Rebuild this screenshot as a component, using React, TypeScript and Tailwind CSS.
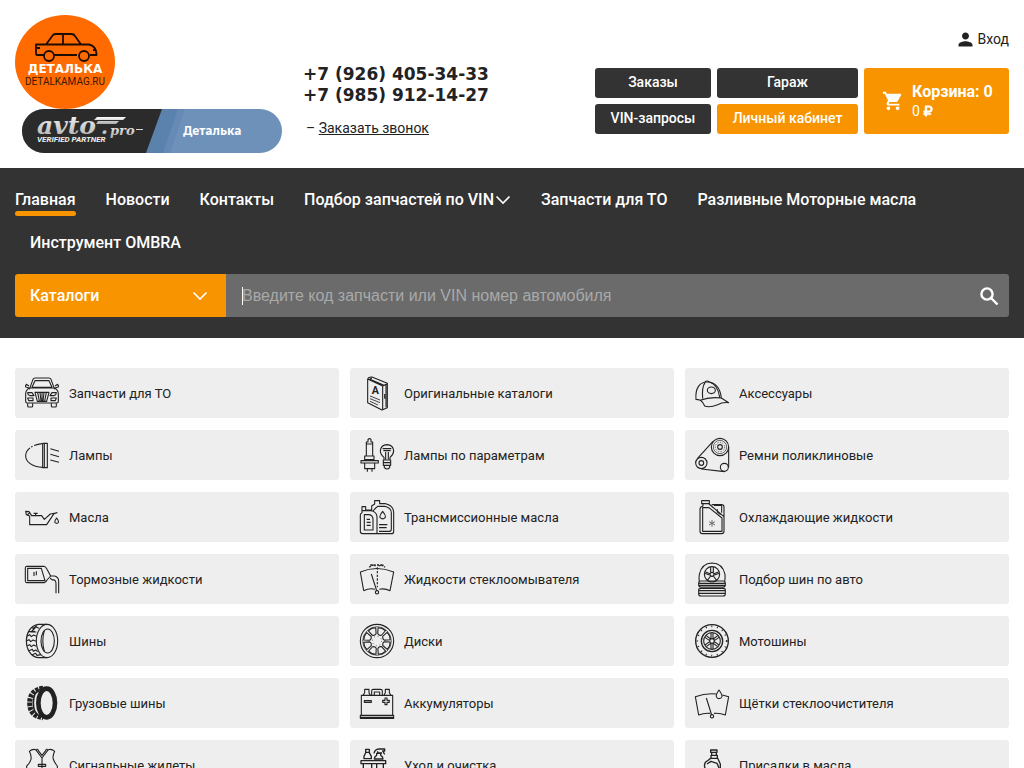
import React from 'react';
import { MdPerson } from 'react-icons/md';
import { FaRubleSign } from 'react-icons/fa';

interface IconProps {
  children: React.ReactNode;
}

const Icon: React.FC<IconProps> = ({ children }) => (
  <svg
    viewBox="0 0 102 102"
    className="w-[34px] h-[34px] shrink-0 overflow-visible"
    fill="none"
    stroke="#222"
    strokeWidth="3.3"
    strokeLinejoin="round"
    aria-hidden="true"
  >
    {children}
  </svg>
);

const spokes = [0, 45, 90, 135, 180, 225, 270, 315];

const categories = [
  {
    title: 'Запчасти для ТО',
    icon: (
      <Icon>
        <path d="M13 40 24 10Q26 6 30 6H72Q76 6 78 10L89 40M21 34 30 14H72L81 34Z" />
        <path d="M13 36Q2 42 2 54V76Q2 81 6 81H96Q100 81 100 76V54Q100 42 89 36ZM12 30 4 25Q0 28 2 33L11 35M90 30 98 25Q102 28 100 33L91 35" />
        <path d="M8 50H21L27 59H15Q8 57 8 50ZM94 50H81L75 59H87Q94 57 94 50ZM8 66H24V74H11ZM94 66H78V74H91Z" />
        <path d="M30 49H72L65 76H37ZM38 50 43 75M45 50 48 75M51 50V75M57 50 54 75M64 50 59 75" />
        <path d="M8 82V90Q8 93 11 93H20Q23 93 23 90V82M79 82V90Q79 93 82 93H91Q94 93 94 90V82" />
      </Icon>
    ),
  },
  {
    title: 'Оригинальные каталоги',
    icon: (
      <Icon>
        <path d="M23 9V80L66 102 82 95V22L36 3Q26 2 23 9ZM23 9 68 30V102M28 9 72 28 82 23M36 6 30 9M74 54V68M68 30 82 24M78 28V94" />
        <path d="M30 60 60 72M30 68 60 80M30 76 54 87" strokeWidth="2.5" />
        <text x="35" y="55" fontSize="32" fontWeight="700" fontFamily="Roboto, sans-serif" fill="#222" stroke="none">A</text>
      </Icon>
    ),
  },
  {
    title: 'Аксессуары',
    icon: (
      <Icon>
        <path d="M3 70C0 36 15 18 36 18 58 17 76 34 79 66L101 80Q82 78 68 86 44 96 29 90 24 78 16 73 9 70 3 70Z" />
        <path d="M16 73Q42 62 79 66M30 20Q20 34 23 68M43 18Q68 24 74 64M30 18Q36 12 43 18" />
        <ellipse cx="49" cy="43" rx="12" ry="10" />
      </Icon>
    ),
  },
  {
    title: 'Лампы',
    icon: (
      <Icon>
        <path d="M52 17C16 21 2 38 2 53 2 69 18 87 54 88" strokeDasharray="25 5 5 4 140" />
        <path d="M53 16H67V89H53ZM58 18V88M76 32 102 40M76 49 102 56M76 66 102 73" />
      </Icon>
    ),
  },
  {
    title: 'Лампы по параметрам',
    icon: (
      <Icon>
        <path d="M19 54V12H24V4Q28 0 33 4V12H38V54M20 18H38M14 54H42V65H14ZM3 68H55V75H3ZM14 76V92H44V76M22 93V101M36 93V101" />
        <path d="M72 66V58Q61 49 61 38 63 21 81 20 99 21 101 38 101 49 90 58V66M70 66H92V82H70ZM73 82V89Q81 97 89 89V82M70 74H92M77 64V42M85 64V42M68 32H94M70 38H92" />
      </Icon>
    ),
  },
  {
    title: 'Ремни поликлиновые',
    icon: (
      <Icon>
        <circle cx="75" cy="27" r="26" />
        <circle cx="75" cy="27" r="20" strokeWidth="2" />
        <circle cx="75" cy="27" r="7" />
        <circle cx="19" cy="75" r="17" />
        <circle cx="19" cy="75" r="7" />
        <circle cx="88" cy="88" r="12" />
        <path d="M54 10 7 62M101 27V88M19 93 88 101" />
        <circle cx="75" cy="27" r="14" strokeWidth="2" strokeDasharray="4 4" />
      </Icon>
    ),
  },
  {
    title: 'Масла',
    icon: (
      <Icon>
        <path d="M14 74V48L4 44 2 34 12 35 20 47H50L58 58 76 42 96 38 87 41 65 74ZM7 45 15 37M26 40H38M32 40V47" />
        <path d="M95 54Q88 63 90 68 95 72 100 68 102 63 95 54Z" />
      </Icon>
    ),
  },
  {
    title: 'Трансмиссионные масла',
    icon: (
      <Icon>
        <path d="M6 38V20H17V30H35V18L44 12V2H59V11H77Q101 17 101 38V95Q101 101 94 101H8Q1 101 1 94V44Q2 40 6 38ZM6 32H34Q51 36 51 51V101" />
        <path d="M39 33Q48 22 54 19H74Q94 24 94 38V88Q94 94 88 94H57M13 44H27Q39 46 39 58V90H13ZM20 58H30M20 67H32M20 76H32M57 74H82M57 83H80M68 34Q58 46 60 52 68 61 76 52 78 46 68 34Z" />
      </Icon>
    ),
  },
  {
    title: 'Охлаждающие жидкости',
    icon: (
      <Icon>
        <path d="M20 2H43V11H20ZM24 12V18Q15 20 15 28V94Q15 101 22 101H80Q87 101 87 94V20Q87 14 79 14H50M42 12 86 49" />
        <path d="M23 23H42L81 54V94H23ZM57 16H80V38M67 28V36L77 44" />
        <path d="M51 60V80M42 65 60 75M60 65 42 75" strokeWidth="2.5" stroke="#555" />
      </Icon>
    ),
  },
  {
    title: 'Тормозные жидкости',
    icon: (
      <Icon>
        <path d="M5 13H57Q62 14 66 22L77 42 66 54Q63 61 58 62H5Q1 61 1 57V17Q1 14 5 13ZM8 19H49L60 56H8Z" />
        <path d="M27 30V42M34 28V40M76 42H89Q101 45 101 58V94M75 49 83 54Q93 52 93 65V94" />
      </Icon>
    ),
  },
  {
    title: 'Жидкости стеклоомывателя',
    icon: (
      <Icon>
        <path d="M1 30Q50 9 101 30L90 86Q74 78 58 82M11 86Q29 77 45 82M11 86 1 30M34 36 50 86" />
        <path d="M52 16V76" strokeDasharray="7 4" />
        <path d="M28 16Q36 6 47 12M56 12Q67 6 75 16" strokeDasharray="6 3" strokeWidth="4" />
        <path d="M31 9H72" strokeDasharray="6 4" strokeWidth="5" />
        <circle cx="51" cy="91" r="5" />
      </Icon>
    ),
  },
  {
    title: 'Подбор шин по авто',
    icon: (
      <Icon>
        <path d="M13 58Q11 48 13 37 20 4 51 3 83 4 90 37 91 48 89 58" />
        <circle cx="51" cy="37" r="23" />
        <circle cx="51" cy="37" r="6" />
        <path d="M57 35 72 29M55 42 65 55M47 42 37 55M45 35 30 29M47 31V15M55 31V15M58 39 74 34M44 39 28 34" />
        <path d="M18 57H84Q91 57 91 63V69Q91 75 84 75H18Q11 75 11 69V63Q11 57 18 57ZM18 79H84Q91 79 91 84V96Q91 102 84 102H18Q11 102 11 96V84Q11 79 18 79ZM12 64H90M12 70H90M12 86H90M12 94H90" />
      </Icon>
    ),
  },
  {
    title: 'Шины',
    icon: (
      <Icon>
        <ellipse cx="66" cy="51" rx="32" ry="50" />
        <ellipse cx="68" cy="51" rx="20" ry="36" />
        <path d="M66 1H40C16 4 4 28 4 51S16 98 40 101H66M58 20Q49 51 58 82M36 4 24 14 30 12 18 24 30 22M12 22 34 24M7 36 14 32 19 38 26 33 34 37M4 51 12 47 17 53 24 48 33 52M6 66 14 62 19 68 26 63 34 67M12 80 22 76 25 82 32 78 38 83M22 92 32 88 36 94 48 92M22 12 34 9 42 13" />
      </Icon>
    ),
  },
  {
    title: 'Диски',
    icon: (
      <Icon>
        <circle cx="51" cy="51" r="50" />
        <circle cx="51" cy="51" r="43" strokeWidth="2" />
        {spokes.map((angle) => (
          <path
            key={angle}
            transform={`rotate(${angle + 22} 51 51)`}
            d="M39 13Q51 8 63 13L57 30Q51 34 45 30Z"
          />
        ))}
        <circle cx="51" cy="51" r="14" strokeWidth="2" strokeDasharray="3 8" />
      </Icon>
    ),
  },
  {
    title: 'Мотошины',
    icon: (
      <Icon>
        <circle cx="51" cy="51" r="49" strokeWidth="4" />
        <circle cx="51" cy="51" r="44" strokeWidth="5" strokeDasharray="3 14" />
        <circle cx="51" cy="51" r="32" strokeWidth="4" />
        <circle cx="51" cy="51" r="25" />
        <circle cx="51" cy="51" r="7" />
        <path d="M48 44V27M54 44V27M48 58V75M54 58V75M44 50 30 40M47 45 33 34M58 50 72 40M55 45 69 34M44 53 30 63M47 58 34 68M58 53 72 63M55 58 68 68" />
      </Icon>
    ),
  },
  {
    title: 'Грузовые шины',
    icon: (
      <Icon>
        <ellipse cx="65" cy="51" rx="25" ry="43" strokeWidth="14" />
        <path d="M54 7C25 10 14 28 14 51S25 92 54 95" strokeWidth="15" strokeDasharray="10 3" />
        <path d="M46 10C31 16 25 31 25 51S31 86 46 92" strokeWidth="5" />
      </Icon>
    ),
  },
  {
    title: 'Аккумуляторы',
    icon: (
      <Icon>
        <path d="M4 28H98V88H4ZM1 88H101V97H1ZM9 28 14 20V10H27V20L31 28M72 28 76 20V10H88V20L93 28M35 28V15Q35 10 40 10H62Q67 10 67 15V28M43 28V18H59V28M1 94H101" />
        <path d="M13 44H34V49H13ZM75 36H81V43H88V49H81V56H75V49H68V43H75Z" />
      </Icon>
    ),
  },
  {
    title: 'Щётки стеклоочистителя',
    icon: (
      <Icon>
        <path d="M64 24Q32 21 1 32L11 87Q28 80 45 82M57 82Q74 80 91 87L101 32 82 27M34 36 50 87" />
        <path d="M72 12Q62 26 64 32 66 38 72 38 79 38 81 32 82 26 72 12Z" />
        <circle cx="51" cy="91" r="5" />
      </Icon>
    ),
  },
  {
    title: 'Сигнальные жилеты',
    icon: (
      <Icon>
        <path d="M13 10Q22 2 32 5L51 30 70 5Q80 2 89 10 82 24 85 34 90 46 97 54V98H5V54Q14 46 18 34 20 22 13 10ZM32 5Q38 1 40 8L51 22 62 8Q64 1 70 5M51 30V98M40 49H62V55H40Z" />
      </Icon>
    ),
  },
  {
    title: 'Уход и очистка',
    icon: (
      <Icon>
        <path d="M17 4H28V13H17ZM17 14 12 25V32H34V25L28 14M42 16Q44 4 57 3H74V9H68L74 19M53 10V15H66M50 16H62V22Q69 26 69 33H43Q43 26 50 22Z" strokeWidth="4" />
        <path d="M3 38H77V47H3ZM10 48V98H70V48M35 48V66H50V48" strokeWidth="4" />
      </Icon>
    ),
  },
  {
    title: 'Присадки в масла',
    icon: (
      <Icon>
        <path d="M47 6H66V13H47ZM50 14V22H64V14M48 22H67V31H48ZM47 31Q42 36 32 42 26 50 30 60V98H76V48L68 31M36 48 48 40 66 46 72 60" strokeWidth="4" />
      </Icon>
    ),
  },
];

const menu = [
  { title: 'Главная', active: true },
  { title: 'Новости' },
  { title: 'Контакты' },
  { title: 'Подбор запчастей по VIN', dropdown: true },
  { title: 'Запчасти для ТО' },
  { title: 'Разливные Моторные масла' },
  { title: 'Инструмент OMBRA' },
];

const Chevron = () => (
  <svg viewBox="0 0 16 10" className="w-4 h-2.5" fill="none" stroke="#fff" strokeWidth="1.6" aria-hidden="true">
    <path d="M1.5 1.5 8 8 14.5 1.5" />
  </svg>
);

const CartIcon = () => (
  <svg viewBox="0 0 24 24" className="w-[22px] h-[22px]" fill="currentColor" aria-hidden="true">
    <path d="M7 18c-1.1 0-1.99.9-1.99 2S5.9 22 7 22s2-.9 2-2-.9-2-2-2zM1 2v2h2l3.6 7.59-1.35 2.45c-.16.28-.25.61-.25.96 0 1.1.9 2 2 2h12v-2H7.42c-.14 0-.25-.11-.25-.25l.03-.12.9-1.63h7.45c.75 0 1.41-.41 1.75-1.03l3.58-6.49A1.003 1.003 0 0 0 20 4H5.21l-.94-2H1zm16 16c-1.1 0-1.99.9-1.99 2s.89 2 1.99 2 2-.9 2-2-.9-2-2-2z" />
  </svg>
);

const SearchIcon = () => (
  <svg viewBox="0 0 24 24" className="w-6 h-6" fill="none" stroke="currentColor" strokeWidth="2.4" aria-hidden="true">
    <circle cx="10" cy="10" r="5.6" />
    <path d="M14 14 20.500 20.500" />
  </svg>
);

const Logo = () => (
  <svg viewBox="0 0 100 94" className="w-[100px] h-[94px]" role="img" aria-label="Деталька">
    <ellipse cx="50" cy="47" rx="50" ry="47" fill="#ff6b00" />
    <g fill="none" stroke="#1c0d00" strokeWidth="1.8" strokeLinejoin="round">
      <path d="M29 40H22Q21 40 21 38V29.500H31L38 20Q39 19 41 19H56Q59 19 60 21L66 29.500H74Q81 31 81.500 39V40H75M62 40H39M31 29.500H66M48 19V29.500M22 33H25M78 35H81" />
      <circle cx="34" cy="41" r="5" />
      <circle cx="69" cy="41" r="5" />
    </g>
    <text x="50" y="58" textAnchor="middle" fontFamily="'DejaVu Sans', sans-serif" fontWeight="700" fontSize="12" fill="#fff">ДЕТАЛЬКА</text>
    <text x="50" y="70" textAnchor="middle" fontFamily="Roboto, sans-serif" fontSize="10" fill="#3a1800">DETALKAMAG.RU</text>
  </svg>
);

const PartnerBadge = () => (
  <svg viewBox="0 0 260 44" className="w-[260px] h-11" role="img" aria-label="avto.pro verified partner">
    <defs>
      <clipPath id="badge">
        <rect width="260" height="44" rx="22" />
      </clipPath>
      <linearGradient id="metal" x1="0" y1="0" x2="0" y2="1">
        <stop offset="0" stopColor="#fff" />
        <stop offset="1" stopColor="#aaa" />
      </linearGradient>
    </defs>
    <g clipPath="url(#badge)">
      <rect width="260" height="44" fill="#6e91ba" />
      <path d="M139 0H163L148 44H124Z" fill="#658ab5" />
      <path d="M139 0H156L141 44H124Z" fill="#5b82ad" />
      <path d="M0 0H140L124 44H0Z" fill="#2b2b2b" />
    </g>
    <g fill="url(#metal)" fontStyle="italic">
      <text x="15" y="25" fontFamily="'DejaVu Serif', serif" fontWeight="700" fontSize="25">avto</text>
      <text x="79" y="25" fontFamily="'DejaVu Serif', serif" fontWeight="700" fontSize="20">.</text>
      <text x="88" y="26" fontFamily="'DejaVu Serif', serif" fontWeight="700" fontSize="13">pro</text>
      <path d="M75 8H104L101 11H72ZM76 12H97L94 15H74Z" />
      <path d="M114 20H121V21H114Z" />
    </g>
    <text x="15" y="33" fontFamily="Roboto, sans-serif" fontStyle="italic" fontWeight="700" fontSize="8" fill="#eee">VERIFIED PARTNER</text>
    <text x="161" y="26" fontFamily="'Noto Sans', sans-serif" fontWeight="700" fontSize="12" fill="#fff">Деталька</text>
  </svg>
);

const Header = () => (
  <header className="flex px-[15px] pt-[15px] pb-[15px] text-[#222]">
    <div className="w-72 shrink-0">
      <a href="#" className="block">
        <Logo />
      </a>
      <a href="#" className="block pl-[7px]">
        <PartnerBadge />
      </a>
    </div>

    <div className="pt-[49px]">
      <div className="flex flex-col font-['DejaVu_Sans',sans-serif] text-[17px] leading-[21px] font-bold">
        <a href="tel:+79264053433">+7 (926) 405-34-33</a>
        <a href="tel:+79859121427">+7 (985) 912-14-27</a>
      </div>
      <div className="mt-3 pl-[3px] text-sm leading-5">
        – <button type="button" className="underline cursor-pointer">Заказать звонок</button>
      </div>
    </div>

    <div className="ml-auto flex flex-col items-end">
      <a href="#" className="mt-3.5 flex h-5 items-center gap-0.5 text-sm leading-5">
        <MdPerson size={21} />
        Вход
      </a>
      <div className="mt-[19px] flex gap-1.5 text-sm font-medium text-white">
        <nav className="grid grid-cols-[116px_141px] gap-1.5 text-center leading-7">
          <a href="#" className="h-[30px] rounded-[3px] bg-[#333]">Заказы</a>
          <a href="#" className="h-[30px] rounded-[3px] bg-[#333]">Гараж</a>
          <a href="#" className="h-[30px] rounded-[3px] bg-[#333]">VIN-запросы</a>
          <a href="#" className="h-[30px] rounded-[3px] bg-[#f79400]">Личный кабинет</a>
        </nav>
        <a href="#" className="flex w-[145px] items-center gap-2 rounded-[3px] bg-[#f79400] pl-[18px]">
          <CartIcon />
          <span className="flex flex-col">
            <span className="text-base leading-5 font-bold">Корзина: 0</span>
            <span className="flex items-center gap-0.5 leading-[18px] font-normal">
              0 <FaRubleSign size={12} stroke="currentColor" strokeWidth="20" />
            </span>
          </span>
        </a>
      </div>
    </div>
  </header>
);

const MenuBar = () => (
  <div className="bg-[#333] px-[15px] pt-[9px] pb-[21px] text-base font-medium text-white">
    <nav>
      <ul className="flex flex-wrap">
        {menu.map((item) => (
          <li key={item.title} className="px-[15px] first:pl-0">
            <a
              href="#"
              className="relative flex h-[43px] items-center gap-px pt-0.5"
            >
              {item.title}
              {item.dropdown && <Chevron />}
              {item.active && <span className="absolute inset-x-0 bottom-1 h-[5px] rounded-sm bg-[#f79400]" />}
            </a>
          </li>
        ))}
      </ul>
    </nav>

    <form className="mt-[11px] flex h-[43px]" onSubmit={(e) => e.preventDefault()}>
      <button
        type="button"
        className="flex w-[211px] shrink-0 items-center justify-between rounded-l-[3px] bg-[#f79400] pr-[18px] pl-[15px] cursor-pointer"
      >
        Каталоги
        <Chevron />
      </button>
      <label className="group relative flex min-w-0 flex-1 items-center bg-[#6b6b6b]">
        <input
          type="text"
          aria-label="Поиск"
          placeholder="Введите код запчасти или VIN номер автомобиля"
          className="h-full w-full pl-4 font-['Liberation_Sans',sans-serif] font-normal text-white outline-none placeholder:text-[#a9a9a9]"
        />
        <span className="absolute left-4 h-[18px] w-px bg-white group-focus-within:hidden" />
      </label>
      <button type="submit" aria-label="Найти" className="rounded-r-[3px] bg-[#6b6b6b] px-2 cursor-pointer">
        <SearchIcon />
      </button>
    </form>
  </div>
);

const App: React.FC = () => {
  return (
    <div className="min-h-screen bg-white font-[Roboto,sans-serif]">
      <Header />
      <MenuBar />
      <main className="grid grid-cols-3 gap-x-[11px] gap-y-3 px-[15px] py-[30px]">
        {categories.map((category) => (
          <a
            key={category.title}
            href="#"
            className="flex h-[50px] items-center gap-2.5 rounded-[3px] bg-[#eee] px-2.5 text-[13px] text-[#222]"
          >
            {category.icon}
            <span className="pt-0.5">{category.title}</span>
          </a>
        ))}
      </main>
    </div>
  );
};

export default App;
